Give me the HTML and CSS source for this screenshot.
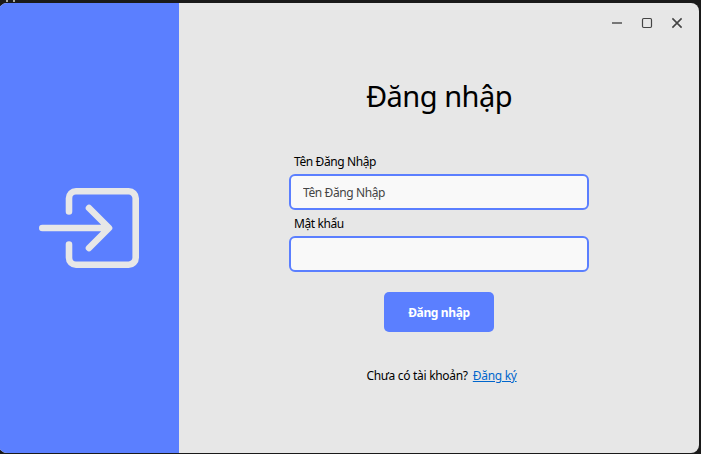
FILE: index.html
```html
<!DOCTYPE html>
<html lang="vi">
<head>
<meta charset="utf-8">
<title>Đăng nhập</title>
<link rel="stylesheet" href="styles.css">
</head>
<body>
<div class="window">
  <aside class="sidebar">
    <svg class="login-icon" width="100" height="80" viewBox="0 0 100 80">
      <path d="M30 23.500V10.300a7 7 0 0 1 7-7H89.700a7 7 0 0 1 7 7V69.700a7 7 0 0 1-7 7H37a7 7 0 0 1-7-7V56.500M3.300 40H69M50 20L70 40L50 60"/>
    </svg>
  </aside>
  <main class="content">
    <div class="controls">
      <svg width="10" height="10" viewBox="0 0 10 10"><path class="minimize" d="M0 5H10"/></svg>
      <svg width="10" height="10" viewBox="0 0 10 10"><rect x=".5" y=".5" width="9" height="9" rx="1.200"/></svg>
      <svg width="10" height="10" viewBox="0 0 10 10"><path class="close" d="M.4 .4L9.600 9.600M9.600 .4L.4 9.600"/></svg>
    </div>
    <h1 class="title">Đăng nhập</h1>
    <form class="form">
      <label class="label" for="user">Tên Đăng Nhập</label>
      <input class="field" id="user" type="text" placeholder="Tên Đăng Nhập">
      <label class="label" for="pass">Mật khẩu</label>
      <input class="field" id="pass" type="password">
      <button class="submit" type="button">Đăng nhập</button>
    </form>
    <p class="signup"><span class="question">Chưa có tài khoản?</span><a class="link" href="#">Đăng ký</a></p>
  </main>
</div>
<div class="backdrop-marks"></div>
</body>
</html>
```
FILE: styles.css
```css
* { box-sizing: border-box; }
body {
  display: flow-root;
  margin: 0;
  height: 454px;
  overflow: hidden;
  background: #1a1a1a;
  font: 12px/16px "Noto Sans", "Open Sans", sans-serif;
  color: #000;
}
.window {
  display: flex;
  width: 700px;
  height: 450px;
  margin: 3px 0 0 -1px;
  border-radius: 8px;
  overflow: hidden;
  background: #e7e7e7;
}
/* Bottoms of letters on the desktop behind the window */
.backdrop-marks {
  position: absolute;
  top: 0;
  left: 6px;
  width: 9px;
  height: 2px;
  border: solid #a9a9a0;
  border-width: 0 2px;
}
.sidebar {
  display: flex;
  width: 180px;
  align-items: center;
  justify-content: center;
  background: #5b7fff;
}
.login-icon {
  fill: none;
  stroke: #e7e7e7;
  stroke-width: 6.6;
  stroke-linecap: round;
  stroke-linejoin: round;
}
.content {
  display: flex;
  width: 520px;
  flex-direction: column;
  align-items: center;
}
.controls {
  display: flex;
  align-self: flex-end;
  gap: 20px;
  padding: 15px 17.5px 0 0;
}
.controls svg {
  overflow: visible;
  fill: none;
  stroke: #444;
  stroke-width: 1.2;
}
.controls .minimize { stroke: #777; stroke-width: 2; }
.controls .close { stroke-width: 1.6; }
.title {
  margin: 48px 0 0;
  font-size: 29px;
  line-height: 40px;
  font-weight: 400;
  letter-spacing: -0.5px;
  white-space: nowrap;
}
.form {
  display: flex;
  width: 300px;
  flex-direction: column;
  margin-top: 38px;
}
.label {
  height: 16px;
  margin: 0 5px 4px;
  letter-spacing: -0.4px;
}
.field {
  height: 36px;
  margin: 0 0 6px;
  padding: 0 12px;
  border: 2px solid #5b7fff;
  border-radius: 6px;
  background: #f9f9f9;
  font: inherit;
  letter-spacing: -0.4px;
  outline: 0;
}
.field::placeholder { color: #444; opacity: 1; }
.submit {
  align-self: center;
  width: 110px;
  height: 40px;
  margin-top: 14px;
  padding: 1px 0 0;
  border: 0;
  border-radius: 5px;
  background: #5b7fff;
  color: #fff;
  font: bold 12px/16px "Noto Sans", "Open Sans", sans-serif;
  letter-spacing: -0.35px;
}
.signup {
  display: flex;
  gap: 5px;
  margin: 36px 0 0 5px;
  letter-spacing: -0.3px;
}
.link { color: #0066cc; }
```
